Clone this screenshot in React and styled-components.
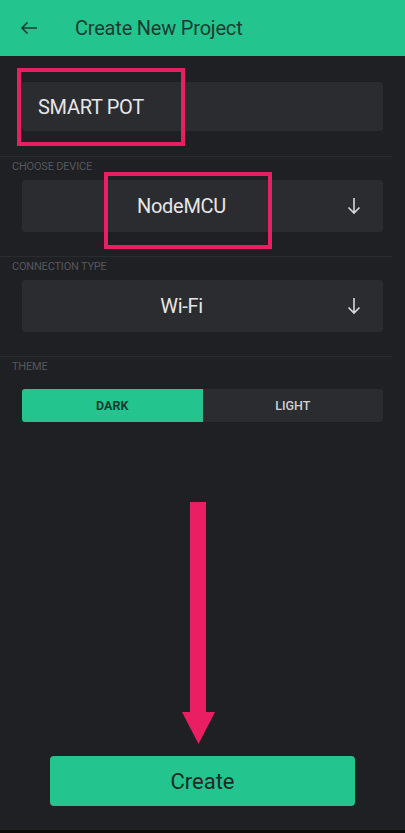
import React from 'react';
import styled, { createGlobalStyle } from 'styled-components';

const GlobalStyle = createGlobalStyle`
  html, body {
    margin: 0;
    padding: 0;
    background: #1f2024;
  }
  * {
    box-sizing: border-box;
  }
`;

function App() {
  return (
    <Screen>
      <GlobalStyle />
      <Header>
        <BackButton aria-label='back'>
          <svg width='18' height='14' viewBox='0 0 18 14'>
            <path
              d='M17 7H2M7.5 1.5L2 7l5.5 5.5'
              fill='none'
              stroke='#1d3b32'
              strokeWidth='1.6'
            />
          </svg>
        </BackButton>
        <Title>Create New Project</Title>
      </Header>

      <Form>
        <NameField>SMART POT</NameField>

        <Section>
          <Label>CHOOSE DEVICE</Label>
          <Select>
            <SelectValue>NodeMCU</SelectValue>
            <DownArrow />
          </Select>
        </Section>

        <Section>
          <Label>CONNECTION TYPE</Label>
          <Select>
            <SelectValue>Wi-Fi</SelectValue>
            <DownArrow />
          </Select>
        </Section>

        <Section>
          <Label>THEME</Label>
          <Toggle>
            <ToggleOption active>DARK</ToggleOption>
            <ToggleOption>LIGHT</ToggleOption>
          </Toggle>
        </Section>
      </Form>

      <Footer>
        <CreateButton>Create</CreateButton>
      </Footer>

      <Highlight style={{ left: 17, top: 68, width: 168, height: 78 }} />
      <Highlight style={{ left: 104, top: 172, width: 168, height: 77 }} />
      <Pointer />
    </Screen>
  );
}

function DownArrow() {
  return (
    <ArrowBox>
      <svg width='14' height='18' viewBox='0 0 14 18'>
        <path
          d='M7 1v15M1.5 10.5L7 16l5.5-5.5'
          fill='none'
          stroke='#d8d8da'
          strokeWidth='1.6'
        />
      </svg>
    </ArrowBox>
  );
}

function Pointer() {
  return (
    <PointerSvg width='34' height='243' viewBox='0 0 34 243'>
      <rect x='8' y='0' width='16' height='211' fill='#e91e63' />
      <polygon points='0,210 33,210 16.5,242' fill='#e91e63' />
    </PointerSvg>
  );
}

const Screen = styled.div`
  position: relative;
  width: 405px;
  height: 833px;
  display: flex;
  flex-direction: column;
  background: #1f2024;
  font-family: Roboto, 'Noto Sans', sans-serif;
  overflow: hidden;
  border-bottom: 3px solid #0b0b0c;
`;

const Header = styled.header`
  height: 56px;
  flex-shrink: 0;
  display: flex;
  align-items: center;
  background: #23c48e;
  padding: 0 0 0 20px;
`;

const BackButton = styled.div`
  width: 18px;
  display: flex;
  align-items: center;
`;

const Title = styled.h1`
  margin: 0 0 0 37px;
  font-size: 20px;
  font-weight: 400;
  color: #1d3b32;
  letter-spacing: -0.2px;
`;

const Form = styled.div`
  display: flex;
  flex-direction: column;
  padding: 26px 0 0;
`;

const NameField = styled.div`
  margin: 0 22px 1px;
  height: 49px;
  display: flex;
  align-items: center;
  padding-left: 16px;
  background: #2b2c30;
  border-radius: 3px;
  color: #e6e6e8;
  font-size: 20px;
  letter-spacing: -0.3px;
`;

const Section = styled.section`
  margin-top: 24px;
  border-top: 1px solid #2a2b2f;
  margin-right: 13px;
`;

const Label = styled.div`
  padding: 3px 0 0 12px;
  font-size: 11px;
  color: #56575c;
  letter-spacing: -0.2px;
  line-height: 13px;
`;

const Select = styled.div`
  margin: 7px 9px 0 22px;
  height: 52px;
  display: flex;
  align-items: center;
  background: #2b2c30;
  border-radius: 3px;
  color: #e6e6e8;
  font-size: 20px;
`;

const SelectValue = styled.div`
  flex: 1;
  text-align: center;
  padding-left: 8px;
  letter-spacing: -0.3px;
`;

const ArrowBox = styled.div`
  width: 50px;
  display: flex;
  justify-content: center;
  padding-right: 8px;
`;

const Toggle = styled.div`
  margin: 16px 9px 0 22px;
  height: 33px;
  display: flex;
  border-radius: 3px;
  overflow: hidden;
  background: #2b2c30;
`;

const ToggleOption = styled.div`
  flex: 1;
  display: flex;
  align-items: center;
  justify-content: center;
  font-size: 12.5px;
  font-weight: ${(p) => (p.active ? 700 : 500)};
  color: ${(p) => (p.active ? '#1d3b32' : '#d0d0d3')};
  background: ${(p) => (p.active ? '#23c48e' : 'transparent')};
`;

const Footer = styled.div`
  margin-top: auto;
  padding: 0 50px 24px;
`;

const CreateButton = styled.button`
  width: 100%;
  height: 50px;
  border: none;
  border-radius: 4px;
  background: #23c48e;
  color: #1d2a26;
  font-family: Roboto, 'Noto Sans', sans-serif;
  font-size: 22px;
  font-weight: 400;
`;

const Highlight = styled.div`
  position: absolute;
  border: 4px solid #e91e63;
  pointer-events: none;
`;

const PointerSvg = styled.svg`
  position: absolute;
  left: 182px;
  top: 502px;
`;

export default App;
